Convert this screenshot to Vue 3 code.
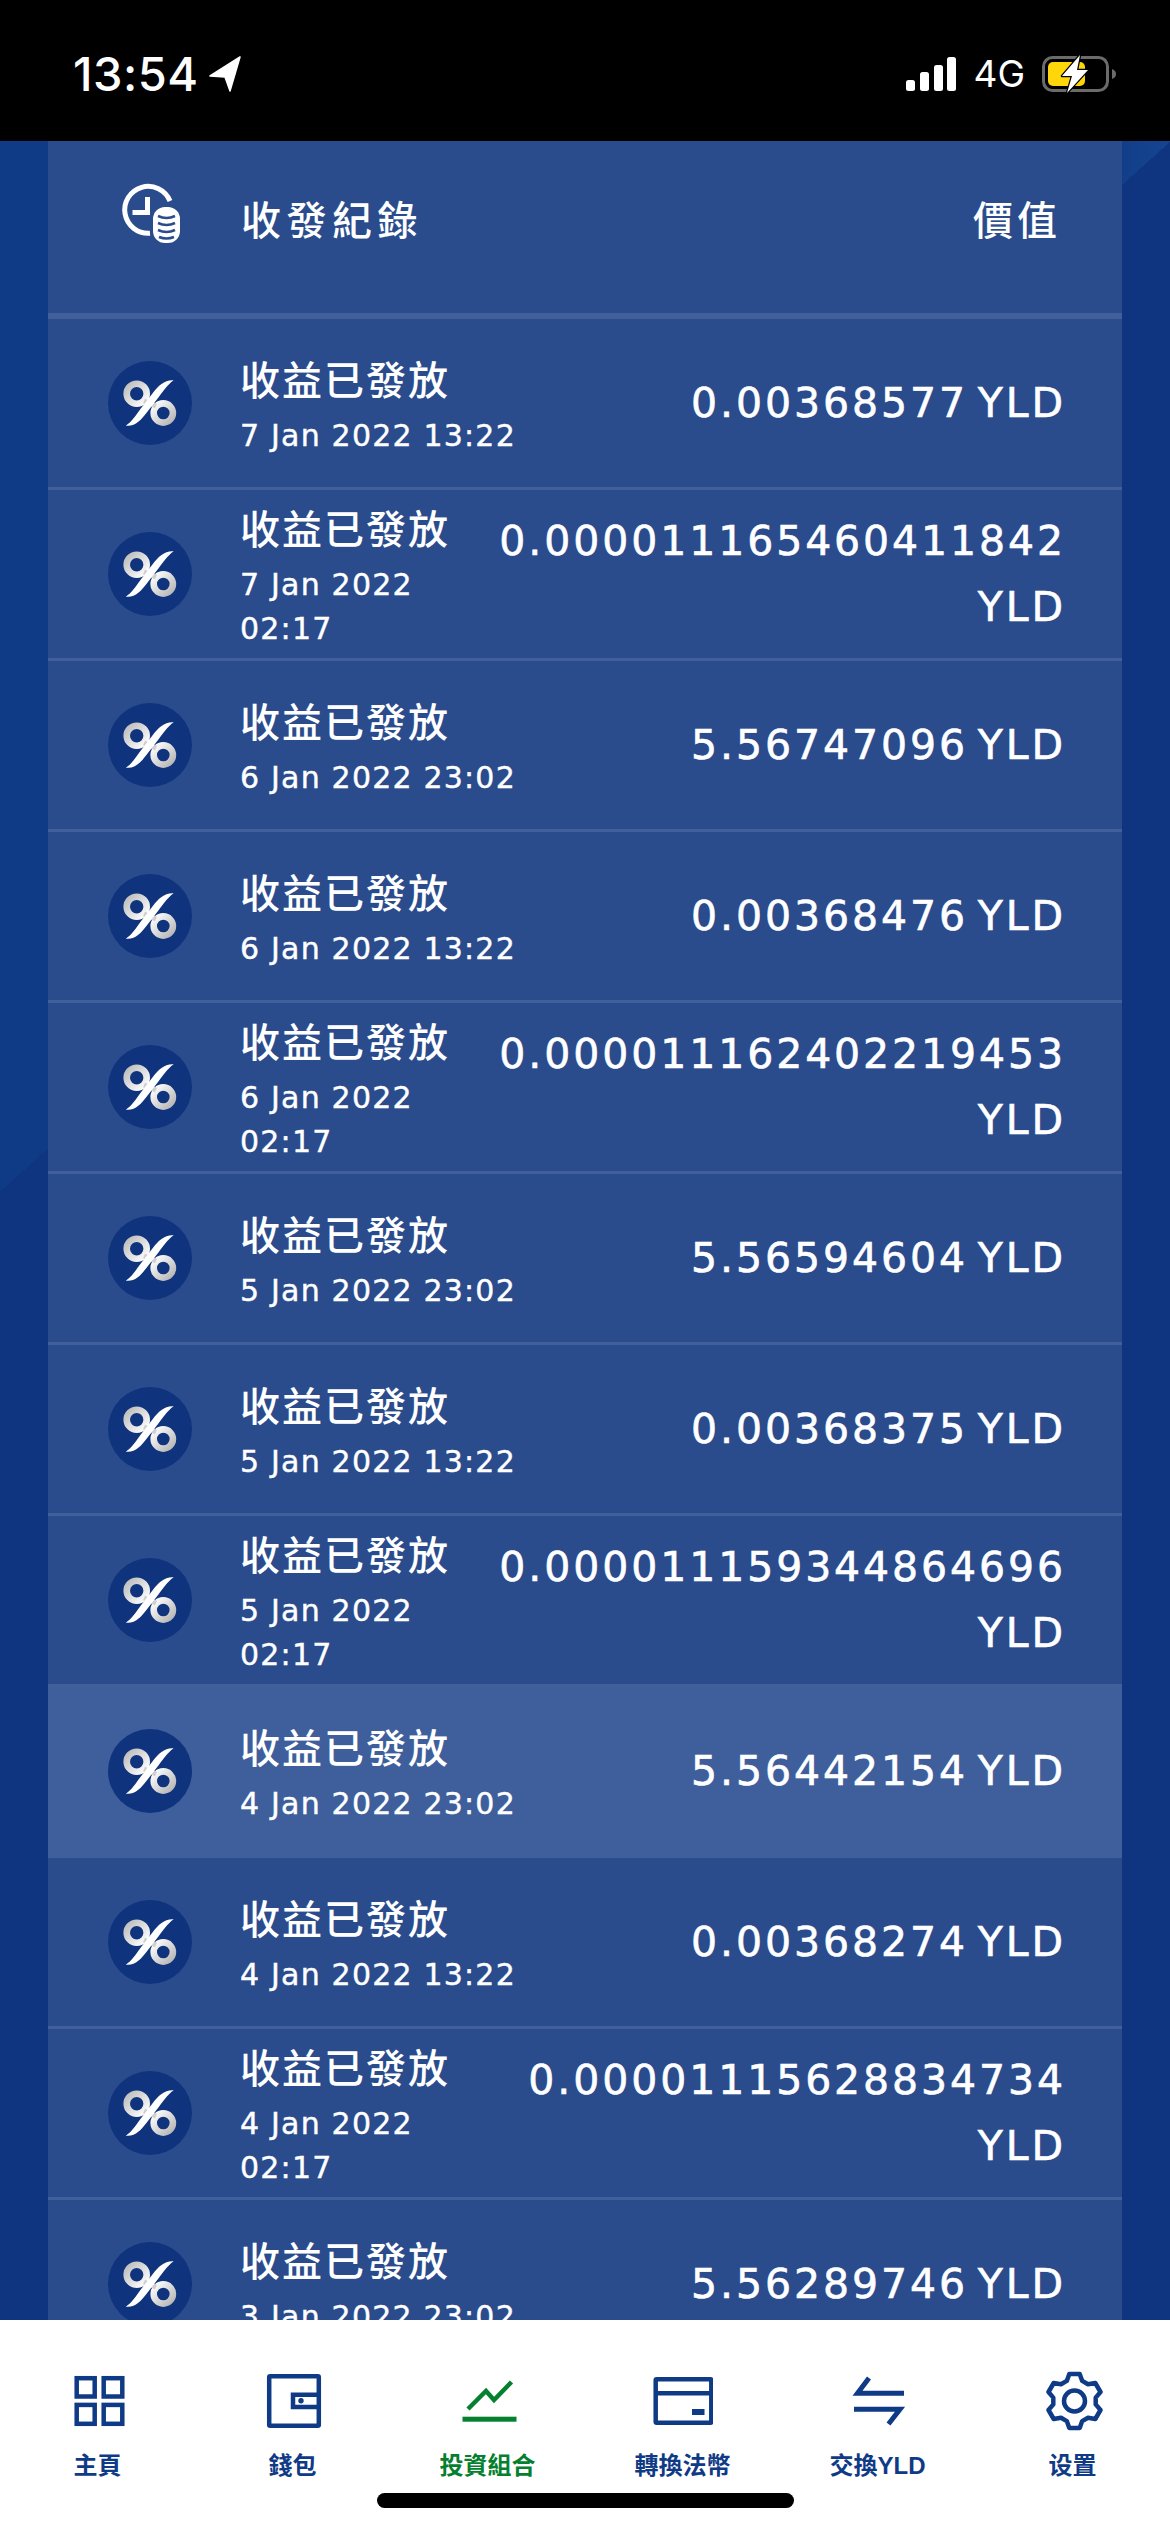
<template>
  <div class="screen">
    <header class="status">
      <div class="status-left">
        <span class="time">13:54</span>
        <svg class="arrow" width="34" height="36" viewBox="0 0 34 36">
          <path d="M32 1 L2 20 L17 21 L22 35 Z" fill="#fff" stroke="#fff" stroke-width="1.500" stroke-linejoin="round" />
        </svg>
      </div>
      <div class="status-right">
        <svg width="50" height="34" viewBox="0 0 50 34">
          <rect x="0" y="23" width="9" height="11" rx="2.5" fill="#fff" />
          <rect x="14" y="15" width="9" height="19" rx="2.5" fill="#fff" />
          <rect x="28" y="8" width="9" height="26" rx="2.5" fill="#fff" />
          <rect x="41" y="0" width="9" height="34" rx="2.5" fill="#fff" />
        </svg>
        <span class="net">4G</span>
        <svg width="76" height="40" viewBox="0 0 76 40">
          <rect x="1.5" y="3.5" width="64" height="33" rx="9" fill="none" stroke="#6b6b6b" stroke-width="3" />
          <path d="M70 15 C73 16 74 18 74 20 C74 22 73 24 70 25 Z" fill="#6b6b6b" />
          <rect x="6" y="8" width="37" height="24" rx="5" fill="#ffd60a" />
          <path d="M38 1 L20 22 H30 L25 39 L46 16 H35 Z" fill="#fff" stroke="#000" stroke-width="2.5" stroke-linejoin="round" paint-order="stroke" />
        </svg>
      </div>
    </header>

    <main class="content">
      <div class="card">
        <div class="head">
          <svg class="head-icon" width="110" height="90" viewBox="0 0 110 90">
            <path d="M70 36 A23.500 23.500 0 1 0 50 68.300" fill="none" stroke="#fff" stroke-width="5" />
            <path d="M47.500 32 V47.500 H32.500" fill="none" stroke="#fff" stroke-width="5" />
            <rect x="53" y="42" width="27" height="36" rx="12" fill="#fff" />
            <path d="M58 51 Q66.500 55 75 51 M58 58 Q66.500 62 75 58 M58 65 Q66.500 69 75 65 M59 72 Q66.500 75 74 72" fill="none" stroke="#2a4c8d" stroke-width="2.600" />
          </svg>
          <span class="head-title">收發紀錄</span>
          <span class="head-value">價值</span>
        </div>
        <div v-for="row in rows" :key="row.date" class="row" :class="{ active: row.active }">
          <svg class="coin" width="84" height="84" viewBox="0 0 84 84">
            <defs>
              <linearGradient id="ringA" x1="0" y1="0" x2="1" y2="1">
                <stop offset="0" stop-color="#bdbdbd" />
                <stop offset="1" stop-color="#fff" />
              </linearGradient>
              <linearGradient id="ringB" x1="0" y1="0" x2="1" y2="1">
                <stop offset="0" stop-color="#fff" />
                <stop offset="1" stop-color="#b5b5b5" />
              </linearGradient>
            </defs>
            <circle cx="42" cy="42" r="42" fill="#0f337c" />
            <circle cx="28.700" cy="32.700" r="10" fill="none" stroke="url(#ringA)" stroke-width="6.600" />
            <circle cx="55.300" cy="52" r="9.600" fill="none" stroke="url(#ringB)" stroke-width="6.600" />
            <path d="M36 40 L48 45" stroke="#cfcfcf" stroke-width="5" />
            <path d="M65.700 19.300 C57 18.500 50.500 24.500 45 31.700 L32.800 47.500 C28.500 53 24 61 17.700 64.700 C27 66 33 59 38.200 52.300 L50.400 36.500 C55 31 59 24 65.700 19.300 Z" fill="#fff" />
          </svg>
          <div class="text">
            <div class="title">收益已發放</div>
            <div class="date">{{ row.date }}</div>
          </div>
          <div class="amount">{{ row.amount }} YLD</div>
        </div>
      </div>
    </main>

    <nav class="nav">
      <div v-for="item in nav" :key="item.label" class="nav-item" :class="{ on: item.on }">
        <svg width="60" height="60" viewBox="0 0 60 60" class="nav-icon">
          <g v-if="item.id === 'home'" fill="none" stroke="currentColor" stroke-width="4.500">
            <rect x="8.700" y="7.200" width="18" height="18.300" />
            <rect x="35.700" y="7.200" width="18.600" height="18.300" />
            <rect x="8.700" y="33.900" width="18" height="18.900" />
            <rect x="35.700" y="33.900" width="18.600" height="18.900" />
          </g>
          <g v-else-if="item.id === 'wallet'" fill="none" stroke="currentColor" stroke-width="4.500">
            <rect x="6.200" y="5.200" width="49.600" height="49.600" rx="1" />
            <path d="M55 23.800 H30 V36 H55" />
            <circle cx="38" cy="29.700" r="2.700" fill="currentColor" stroke="none" />
          </g>
          <g v-else-if="item.id === 'chart'">
            <path d="M10 38 L28 20 L36 29 L53.500 11" fill="none" stroke="currentColor" stroke-width="4.500" />
            <rect x="4.500" y="45.700" width="54" height="5" fill="currentColor" />
          </g>
          <g v-else-if="item.id === 'card'" fill="none" stroke="currentColor" stroke-width="4.500">
            <rect x="2.700" y="8.200" width="55.600" height="43.600" rx="1" />
            <path d="M2 22.300 H58" />
            <rect x="39" y="38" width="12.500" height="6" fill="currentColor" stroke="none" />
          </g>
          <g v-else-if="item.id === 'swap'" fill="none" stroke="currentColor" stroke-width="5">
            <path d="M21 7 L9.500 22.300 H56" />
            <path d="M6 38.200 H52 L40.500 53" />
          </g>
          <g v-else fill="none" stroke="currentColor" stroke-width="4.500" stroke-linejoin="round">
            <path :d="gear" />
            <circle cx="31.500" cy="30" r="10.500" />
          </g>
        </svg>
        <span class="nav-label">{{ item.label }}</span>
      </div>
      <div class="home-bar"></div>
    </nav>
  </div>
</template>

<script setup>
const rows = [
  { date: "7 Jan 2022 13:22", amount: "0.00368577" },
  { date: "7 Jan 2022 02:17", amount: "0.000011165460411842" },
  { date: "6 Jan 2022 23:02", amount: "5.56747096" },
  { date: "6 Jan 2022 13:22", amount: "0.00368476" },
  { date: "6 Jan 2022 02:17", amount: "0.000011162402219453" },
  { date: "5 Jan 2022 23:02", amount: "5.56594604" },
  { date: "5 Jan 2022 13:22", amount: "0.00368375" },
  { date: "5 Jan 2022 02:17", amount: "0.000011159344864696" },
  { date: "4 Jan 2022 23:02", amount: "5.56442154", active: true },
  { date: "4 Jan 2022 13:22", amount: "0.00368274" },
  { date: "4 Jan 2022 02:17", amount: "0.00001115628834734" },
  { date: "3 Jan 2022 23:02", amount: "5.56289746" },
];

const nav = [
  { id: "home", label: "主頁" },
  { id: "wallet", label: "錢包" },
  { id: "chart", label: "投資組合", on: true },
  { id: "card", label: "轉換法幣" },
  { id: "swap", label: "交換YLD" },
  { id: "gear", label: "设置" },
];

// six toothed outline, points worked out around the centre of the 60 box
function makeGear() {
  const pts = [];
  for (let i = 0; i < 6; i++) {
    const a = (i * 60 - 90) * (Math.PI / 180);
    const offs = [[-21, 21.5], [-11, 27.5], [11, 27.5], [21, 21.5]];
    for (const [deg, r] of offs) {
      const t = a + (deg * Math.PI) / 180;
      pts.push((31.5 + r * Math.cos(t)).toFixed(1) + " " + (30 + r * Math.sin(t)).toFixed(1));
    }
  }
  return "M" + pts.join(" L") + " Z";
}
const gear = makeGear();
</script>

<style>
html,
body {
  margin: 0;
  background: #000;
}
</style>

<style scoped>
.screen {
  width: 1170px;
  height: 2532px;
  display: flex;
  flex-direction: column;
  overflow: hidden;
  font-family: "DejaVu Sans", "Noto Sans CJK TC", sans-serif;
  color: #fff;
}
.status {
  height: 141px;
  flex: none;
  background: #000;
  display: flex;
  justify-content: space-between;
  padding: 0 52px 0 73px;
  align-items: flex-start;
  box-sizing: border-box;
}
.status-left {
  display: flex;
  align-items: center;
  gap: 9px;
  margin-top: 50px;
}
.time {
  font-family: Inter, sans-serif;
  font-size: 47px;
  font-weight: 500;
  line-height: 48px;
  letter-spacing: 0.5px;
}
.status-right {
  display: flex;
  align-items: center;
  margin-top: 54px;
  gap: 17px;
}
.net {
  font-family: Inter, sans-serif;
  font-size: 37px;
  line-height: 40px;
}
.content {
  flex: 1;
  min-height: 0;
  overflow: hidden;
  padding: 0 48px;
  background:
    linear-gradient(138.1deg, transparent 782px, #0f3580 782px),
    linear-gradient(90deg, #0f3b86 0, #0f3b86 1100px, #174490 100%);
}
.card {
  background: #2a4c8d;
}
.head {
  height: 178px;
  box-sizing: border-box;
  border-bottom: 6px solid #41609b;
  display: flex;
  align-items: center;
  padding: 0 61px 18px 52px;
}
.head-icon {
  flex: none;
  margin: -16px 31px 0 0;
}
.head-title,
.head-value {
  font-size: 40px;
  font-weight: 500;
  letter-spacing: 5.500px;
  font-family: "Noto Sans CJK TC", sans-serif;
}
.head-value {
  letter-spacing: 4px;
}
.head-title {
  flex: 1;
}
.row {
  height: 171px;
  box-sizing: border-box;
  border-bottom: 3px solid #41609b;
  display: flex;
  align-items: center;
  padding: 0 60px;
}
.row.active {
  background: #3e5f9c;
  border-bottom-color: #3e5f9c;
}
.coin {
  flex: none;
  margin-right: 48px;
}
.text {
  flex: 1 1 0;
  min-width: 208px;
}
.title {
  font-family: "Noto Sans CJK TC", sans-serif;
  font-size: 40px;
  font-weight: 500;
  letter-spacing: 2px;
  line-height: 60px;
  margin-bottom: 6px;
  white-space: nowrap;
}
.date {
  font-size: 30px;
  letter-spacing: 1.200px;
  line-height: 44px;
  -webkit-text-stroke: 0.4px #fff;
}
.amount {
  flex: 0 1 auto;
  max-width: 572px;
  margin-right: -4px;
  text-align: right;
  font-size: 41px;
  letter-spacing: 2.900px;
  word-spacing: -6px;
  line-height: 66px;
  -webkit-text-stroke: 0.6px #fff;
}
.nav {
  height: 212px;
  flex: none;
  background: #fff;
  display: flex;
  position: relative;
  padding-top: 51px;
  box-sizing: border-box;
  align-items: flex-start;
}
.nav-item {
  flex: 1;
  display: flex;
  flex-direction: column;
  align-items: center;
  color: #0f3a85;
}
.nav-item.on {
  color: #05802f;
}
.nav-icon {
  display: block;
}
.nav-label {
  font-family: "Liberation Sans", "Noto Sans CJK TC", sans-serif;
  font-size: 24px;
  font-weight: 700;
  line-height: 34px;
  margin-top: 18px;
}
.home-bar {
  position: absolute;
  left: 377px;
  width: 417px;
  top: 173px;
  height: 15px;
  border-radius: 8px;
  background: #000;
}
</style>
